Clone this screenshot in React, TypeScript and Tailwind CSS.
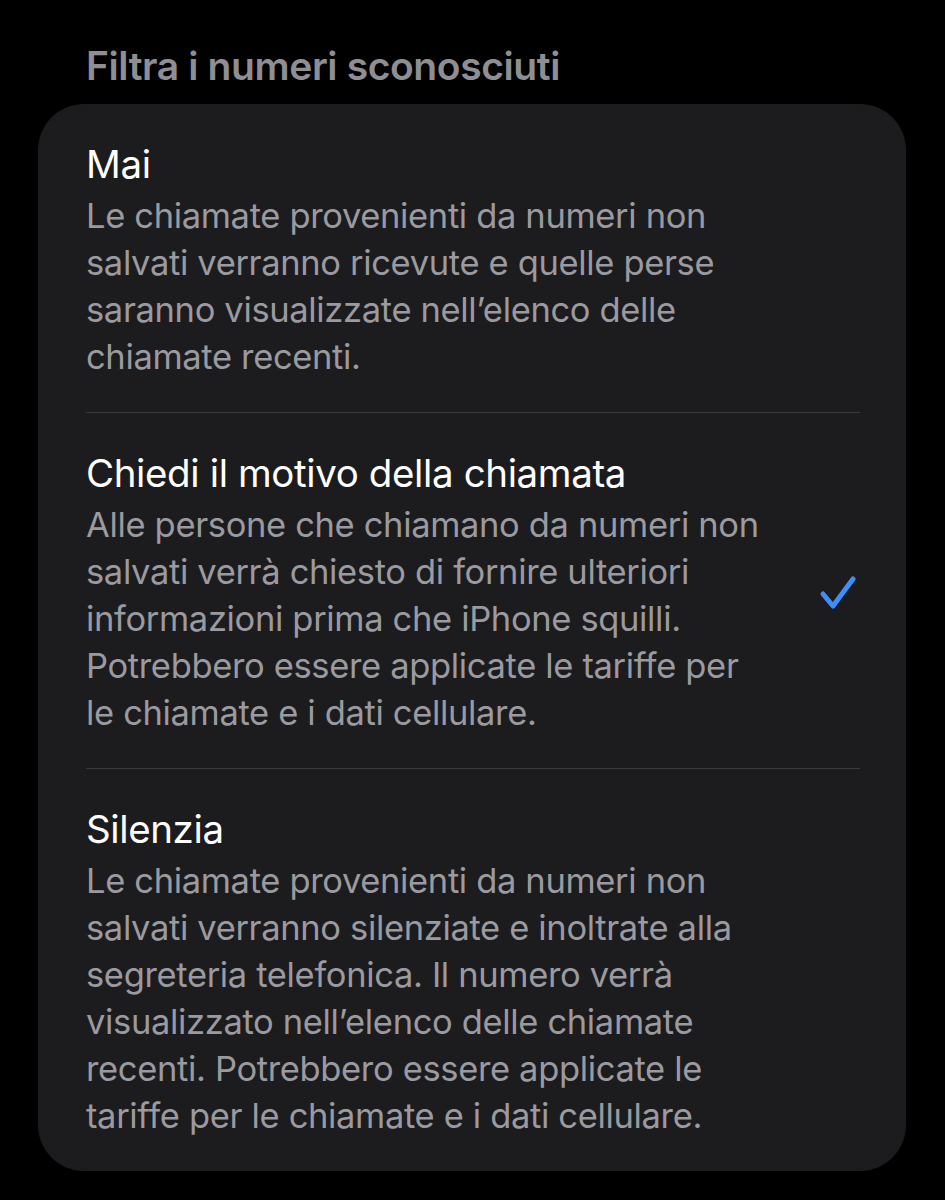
import React from "react";

interface OptionProps {
  title: string;
  lines: string[];
  selected?: boolean;
  last?: boolean;
}

function CheckIcon() {
  return (
    <svg width="38" height="36" viewBox="0 0 38 36" fill="none" className="shrink-0">
      <polyline
        points="4,19 14,31 34,4"
        stroke="#3d8ef7"
        strokeWidth="5"
        strokeLinecap="round"
        strokeLinejoin="round"
      />
    </svg>
  );
}

function Option({ title, lines, selected, last }: OptionProps) {
  return (
    <div className="pl-[48px] pr-[46px]">
      <div className="flex items-center pt-[37px] pb-[32px]">
        <div className="flex-1">
          <div className="text-white text-[38.5px] leading-[47px] tracking-[-0.01em]">{title}</div>
          <div className="mt-[4px] text-[#9a9aa0] text-[34.5px] leading-[47px] tracking-[-0.01em]">
            {lines.map((l) => (
              <div key={l} className="whitespace-nowrap">
                {l}
              </div>
            ))}
          </div>
        </div>
        {selected && (
          <div className="pr-[3px]">
            <CheckIcon />
          </div>
        )}
      </div>
      {!last && <div className="h-px bg-[#3a3a3c]" />}
    </div>
  );
}

export default function App() {
  return (
    <div
      className="min-h-[1200px] w-[945px] bg-black pt-[44px]"
      style={{ fontFamily: "Inter, 'Noto Sans', sans-serif" }}
    >
      <h2 className="pl-[86px] text-[39px] leading-[44px] font-semibold text-[#8e8e93] tracking-[-0.01em]">
        Filtra i numeri sconosciuti
      </h2>
      <div className="mt-[16px] ml-[38px] mr-[39px] rounded-[46px] bg-[#1c1c1e]">
        <Option
          title="Mai"
          lines={[
            "Le chiamate provenienti da numeri non",
            "salvati verranno ricevute e quelle perse",
            "saranno visualizzate nell’elenco delle",
            "chiamate recenti.",
          ]}
        />
        <Option
          title="Chiedi il motivo della chiamata"
          selected
          lines={[
            "Alle persone che chiamano da numeri non",
            "salvati verrà chiesto di fornire ulteriori",
            "informazioni prima che iPhone squilli.",
            "Potrebbero essere applicate le tariffe per",
            "le chiamate e i dati cellulare.",
          ]}
        />
        <Option
          title="Silenzia"
          last
          lines={[
            "Le chiamate provenienti da numeri non",
            "salvati verranno silenziate e inoltrate alla",
            "segreteria telefonica. Il numero verrà",
            "visualizzato nell’elenco delle chiamate",
            "recenti. Potrebbero essere applicate le",
            "tariffe per le chiamate e i dati cellulare.",
          ]}
        />
      </div>
    </div>
  );
}
